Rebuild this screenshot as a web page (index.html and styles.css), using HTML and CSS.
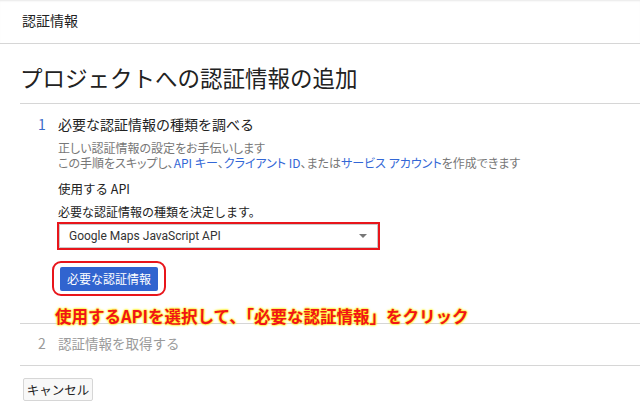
FILE: index.html
```html
<!DOCTYPE html>
<html lang="ja">
<head>
    <meta charset="UTF-8">
    <title>認証情報</title>
    <link rel="stylesheet" href="styles.css">
</head>
<body>
    <div class="topbar">認証情報</div>

    <div class="page">
        <h1 class="page-title">プロジェクトへの認証情報の追加</h1>

        <div class="step">
            <div class="step-head">
                <span class="step-num">1</span>
                <span class="step-title">必要な認証情報の種類を調べる</span>
            </div>
            <div class="step-body">
                <p class="desc">
                    正しい認証情報の設定をお手伝いします<br>
                    この手順をスキップし、<a href="#">API キー</a>、<a href="#">クライアント ID</a>、または<a href="#">サービス アカウント</a>を作成できます
                </p>
                <div class="field-label">使用する API</div>
                <div class="field-hint">必要な認証情報の種類を決定します。</div>
                <div class="mark-box">
                    <div class="select">
                        <span>Google Maps JavaScript API</span>
                        <span class="caret"></span>
                    </div>
                </div>
                <div class="mark-round">
                    <button class="btn-primary">必要な認証情報</button>
                </div>
                <div class="note">使用するAPIを選択して、「必要な認証情報」をクリック</div>
            </div>
        </div>

        <div class="step step-off">
            <div class="step-head">
                <span class="step-num">2</span>
                <span class="step-title">認証情報を取得する</span>
            </div>
        </div>
    </div>

    <button class="btn-cancel">キャンセル</button>
</body>
</html>
```

FILE: styles.css
```css
body {
    margin: 0;
    font-family: "Noto Sans CJK JP", "Liberation Sans", sans-serif;
    color: #222;
    background: #fff;
}
.topbar {
    height: 43px;
    line-height: 40px;
    padding-left: 22px;
    font-size: 14px;
    color: #222;
    border-bottom: 1px solid #d6d6d6;
    box-shadow: inset 0 2px 2px -1px #e8e8e8;
}
.page {
    margin-left: 20px;
}
.page-title {
    margin: 0;
    padding: 22px 0 15px 0;
    font-size: 22.5px;
    line-height: 22px;
    font-weight: normal;
    color: #222;
    border-bottom: 1px solid #d6d6d6;
}
.step {
    border-bottom: 1px solid #d6d6d6;
}
.step-head {
    display: flex;
    padding-top: 10px;
    line-height: 20px;
    font-size: 14px;
}
.step-num {
    width: 20px;
    padding-left: 18px;
    color: #3b6bc9;
}
.step-title {
    color: #222;
}
.step-body {
    padding-left: 38px;
}
.desc {
    margin: 6px 0 0 0;
    font-size: 12px;
    line-height: 15px;
    color: #777;
    font-feature-settings: "palt";
}
.desc a {
    color: #3367d6;
    text-decoration: none;
}
.field-label {
    margin-top: 10px;
    font-size: 12.5px;
    line-height: 18px;
    color: #222;
}
.field-hint {
    margin-top: 6px;
    font-size: 12px;
    line-height: 16px;
    color: #222;
}
.mark-box {
    margin-top: 2px;
    margin-left: -1px;
    width: 319px;
    border: 2px solid #e8151b;
}
.select {
    display: flex;
    justify-content: space-between;
    align-items: center;
    height: 22px;
    padding: 0 10px 0 9px;
    border: 1px solid #c9c9c9;
    font-family: Roboto, "Liberation Sans", sans-serif;
    font-size: 12px;
    color: #333;
}
.caret {
    width: 0;
    height: 0;
    border-left: 4px solid transparent;
    border-right: 4px solid transparent;
    border-top: 4px solid #777;
}
.mark-round {
    margin-top: 11px;
    margin-left: -6px;
    width: 110px;
    height: 31px;
    border: 2px solid #e8151b;
    border-radius: 9px;
    display: flex;
    align-items: center;
    justify-content: center;
}
.btn-primary {
    width: 98px;
    height: 24px;
    padding: 0;
    border: none;
    border-radius: 2px;
    background: #3164cf;
    color: #fff;
    font-family: inherit;
    font-size: 12px;
}
.note {
    margin: 12px 0 -1px -3px;
    font-size: 16.5px;
    line-height: 16px;
    font-weight: bold;
    color: #f0141a;
    text-shadow: 0 0 2px #ffee00, 0 0 2px #ffee00, 0 0 3px #fff34d;
}
.step-off .step-head {
    padding-top: 9px;
    padding-bottom: 12px;
}
.step-off .step-num,
.step-off .step-title {
    color: #9a9a9a;
}
.step-off .step-title {
    font-size: 13.5px;
}
.btn-cancel {
    margin: 12px 0 0 23px;
    height: 23px;
    width: 70px;
    padding: 0;
    border: 1px solid #d6d6d6;
    border-radius: 2px;
    background: #f8f8f8;
    font-family: inherit;
    font-size: 12.5px;
    color: #222;
}
```
